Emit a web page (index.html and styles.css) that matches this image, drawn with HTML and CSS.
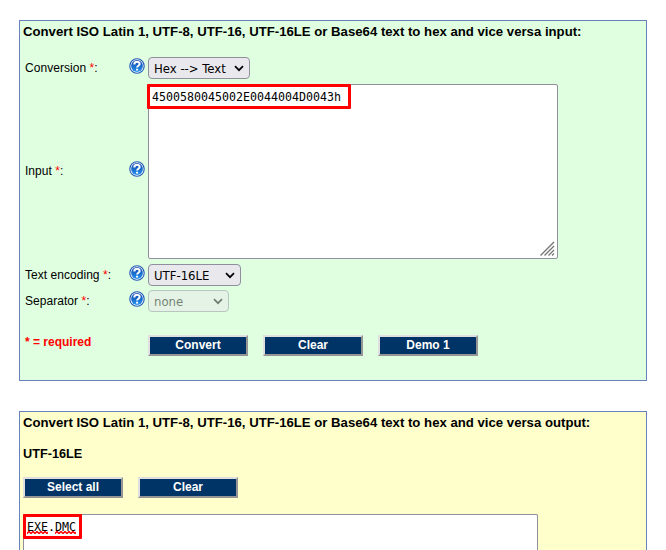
FILE: index.html
```
<!DOCTYPE html>
<html lang="en">
<head>
<meta charset="utf-8">
<title>Text to hex converter</title>
<link rel="stylesheet" href="styles.css">
</head>
<body>
<svg width="0" height="0" class="defs">
  <defs>
    <linearGradient id="blue" x1="0" y1="0" x2="0" y2="1"><stop offset="0" stop-color="#0b43a8"/><stop offset="1" stop-color="#2594ee"/></linearGradient>
    <pattern id="wave" width="4" height="3" patternUnits="userSpaceOnUse"><path d="M-1 1.5L0 2.5L2 .5L4 2.5L5 1.5" fill="none" stroke="#f00" stroke-width="1.5"/></pattern>
    <symbol id="help" viewBox="0 0 16 16">
      <circle cx="8" cy="8" r="7.2" fill="#fff" stroke="#1d55b5" stroke-width="1.1"/>
      <circle cx="8" cy="8" r="5.9" fill="url(#blue)"/>
      <path d="M5.3 6.4C5.3 3 10.7 3 10.7 6.1C10.7 7.8 8.1 7.8 8.1 9.6" fill="none" stroke="#fff" stroke-width="2"/>
      <rect x="7.1" y="10.7" width="2" height="1.9" fill="#fff"/>
    </symbol>
    <symbol id="arrow" viewBox="0 0 10 7"><path d="M1 1.2L5 5.2L9 1.2" fill="none" stroke="currentColor" stroke-width="1.7"/></symbol>
  </defs>
</svg>
<section class="panel input">
  <h2>Convert ISO Latin 1, UTF-8, UTF-16, UTF-16LE or Base64 text to hex and vice versa input:</h2>
  <div class="row conversion">
    <label>Conversion <b>*</b>:</label><svg class="help"><use href="#help"/></svg>
    <div class="select w-conv"><span>Hex --&gt; Text</span><svg><use href="#arrow"/></svg></div>
  </div>
  <div class="row area-row">
    <label>Input <b>*</b>:</label><svg class="help"><use href="#help"/></svg>
    <div class="area">4500580045002E0044004D0043h<i class="mark"></i>
      <svg class="grip" viewBox="0 0 15 15"><path d="M.5 14.5L14 1M4.5 14.5L14 5M8.5 14.5L14 9M12 14.5L14 12.5" stroke="#777" stroke-width="1.4" fill="none"/></svg>
    </div>
  </div>
  <div class="row encoding">
    <label>Text encoding <b>*</b>:</label><svg class="help"><use href="#help"/></svg>
    <div class="select w-enc"><span>UTF-16LE</span><svg><use href="#arrow"/></svg></div>
  </div>
  <div class="row separator">
    <label>Separator <b>*</b>:</label><svg class="help"><use href="#help"/></svg>
    <div class="select w-sep disabled"><span>none</span><svg><use href="#arrow"/></svg></div>
  </div>
  <div class="actions">
    <strong>* = required</strong>
    <div class="button">Convert</div><div class="button">Clear</div><div class="button">Demo 1</div>
  </div>
</section>
<section class="panel output">
  <h2>Convert ISO Latin 1, UTF-8, UTF-16, UTF-16LE or Base64 text to hex and vice versa output:</h2>
  <h3>UTF-16LE</h3>
  <div class="buttons"><div class="button">Select all</div><div class="button">Clear</div></div>
  <div class="area result"><span class="word">EXE<svg><rect width="21" height="3" fill="url(#wave)"/></svg></span>.<span class="word">DMC<svg><rect width="21" height="3" fill="url(#wave)"/></svg></span><i class="mark"></i></div>
</section>
</body>
</html>
```
FILE: styles.css
```
* { box-sizing: border-box; }
body { margin: 0; padding: 20px 19px 0; height: 550px; overflow: hidden; background: #fff; color: #000; font-family: "Liberation Sans", Arial, sans-serif; }
.defs { position: absolute; }
.panel { width: 628px; border: 1px solid #6883bb; padding-left: 3px; }
.input { height: 361px; background: #e0ffe0; margin-bottom: 30px; }
.output { height: 139px; border-bottom: 0; background: #ffffcc; }
h2, h3 { margin: 0; font-size: 13.18px; line-height: 20px; font-weight: bold; white-space: nowrap; }
h2 { padding-top: 1px; height: 20px; }
.row { display: grid; grid-template-columns: 104px 21px 1fr; padding-left: 2px; align-items: center; height: 22px; }
label { font-size: 12px; letter-spacing: .04px; line-height: 16px; white-space: nowrap; padding-bottom: 1px; }
label b { color: red; font-weight: normal; }
.help { width: 16px; height: 16px; margin-top: -5px; margin-left: -.5px; }
.select { height: 22px; border: 1px solid #8f8f9d; border-radius: 4px; background: #e9e9ed; display: flex; align-items: center; justify-content: space-between; padding: 1px 5px 0; font: 13px "DejaVu Sans Condensed", "DejaVu Sans", sans-serif; font-stretch: condensed; }
.row > :last-child { margin-left: -2px; }
.select svg { width: 10px; height: 7px; }
.w-conv { width: 102px; }
.w-enc { width: 93px; }
.w-sep { width: 81px; }
.disabled { opacity: .5; }
.conversion { margin-top: 16px; }
.area-row { height: 175px; margin-top: 5px; }
.area { position: relative; width: 410px; height: 175px; border: 1px solid #8f8f9d; border-radius: 2px; background: #fff; padding: 3px 3px; font: 11.63px/18px "DejaVu Sans Mono", monospace; }
.mark { position: absolute; left: -2px; top: -1px; width: 204px; height: 25px; border: 3px solid red; border-radius: 1px; }
.grip { position: absolute; right: 2px; bottom: 2px; width: 15px; height: 15px; }
.encoding { margin-top: 5px; }
.separator { margin-top: 4px; }
.actions { display: flex; gap: 15px; margin-top: 23px; padding-left: 2px; }
.actions strong { width: 108px; color: red; font-size: 12px; line-height: 14px; }
.button { width: 100px; height: 21px; border: 2px solid; border-color: #dfdfdf #959595 #959595 #dfdfdf; background: #003366; color: #fff; font-size: 12px; line-height: 16px; font-weight: bold; text-align: center; }
h3 { margin-top: 12px; font-size: 12.7px; }
.buttons { display: flex; gap: 15px; margin-top: 13px; }
.result { width: 515px; height: 36px; margin-top: 16px; padding-bottom: 0; border-bottom: 0; border-radius: 2px 2px 0 0; }
.result .mark { left: -1px; width: 59px; }
.word { position: relative; display: inline-block; height: 18px; vertical-align: top; }
.word svg { position: absolute; left: 0; top: 13px; width: 21px; height: 3px; }
```
